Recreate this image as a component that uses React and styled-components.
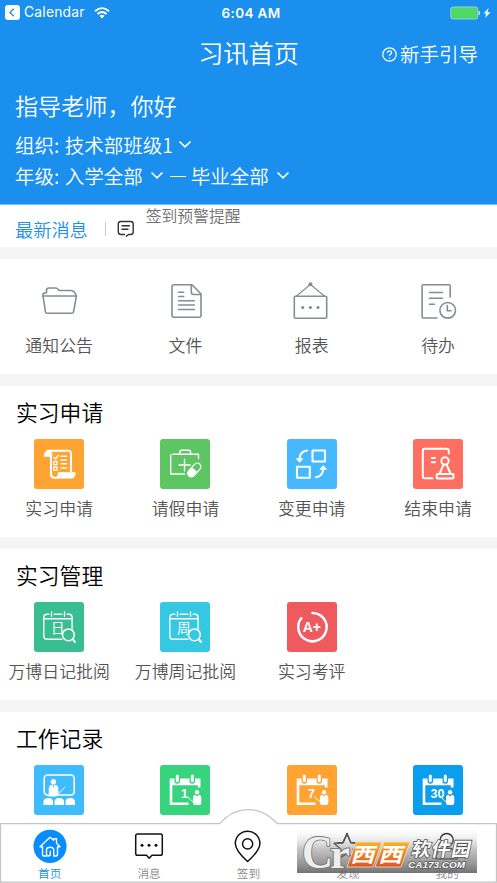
import React from "react";
import styled, { createGlobalStyle } from "styled-components";

const GlobalStyle = createGlobalStyle`
  *, *::before, *::after { box-sizing: border-box; }
  body {
    margin: 0;
    background: #fff;
    font-family: "Noto Sans CJK SC", sans-serif;
    font-weight: 350;
  }
`;

const Screen = styled.div`
  position: relative;
  width: 497px;
  height: 883px;
  overflow: hidden;
  display: flex;
  flex-direction: column;
  gap: 12px;
  background: #f5f5f5;
`;

const Top = styled.div`
  flex: none;
  height: 247px;
  background: #fff;
`;

const Header = styled.header`
  height: 205px;
  background: #1a8fee;
  border-bottom: 1px solid #7cbff5;
  color: #fff;
`;

const StatusBar = styled.div`
  display: grid;
  grid-template-columns: 1fr auto 1fr;
  align-items: center;
  height: 25px;
  padding: 0 5px 0 5px;
  font-family: Inter, sans-serif;
  font-size: 14px;
  line-height: 24px;
`;

const StatusSide = styled.div`
  display: flex;
  align-items: center;
  justify-content: ${(p) => (p.$end ? "flex-end" : "flex-start")};
`;

const BackApp = styled.span`
  margin: -1px 9px 0 4px;
  font-size: 13.8px;
  font-weight: 400;
  letter-spacing: 0.25px;
`;

const Clock = styled.span`
  padding: 0 0 0 5px;
  font-size: 13.5px;
  font-weight: 600;
  letter-spacing: 0.35px;
`;

const TitleBar = styled.div`
  display: grid;
  grid-template-columns: 1fr auto 1fr;
  align-items: center;
  height: 58px;
  padding-right: 19px;
`;

const Title = styled.h1`
  grid-column: 2;
  margin: 0 0 4px 19px;
  font-size: 25.2px;
  font-weight: 350;
  line-height: 36px;
`;

const Guide = styled.div`
  display: flex;
  align-items: center;
  justify-content: flex-end;
  gap: 3px;
  font-size: 19.5px;
  line-height: 28px;
`;

const Greeting = styled.div`
  height: 46px;
  padding-left: 15px;
  font-size: 23.1px;
  line-height: 44px;
`;

const FilterRow = styled.div`
  display: flex;
  align-items: center;
  height: 31px;
  padding-left: 15px;
  font-size: 19.5px;
  line-height: 31px;
  white-space: pre;
  word-spacing: 1.2px;
`;

const Dash = styled.span`
  width: 16px;
  height: 1px;
  margin: 2px 5px 0 6px;
  background: #fff;
`;

const News = styled.div`
  display: flex;
  height: 42px;
  padding-left: 15px;
`;

const NewsTitle = styled.div`
  font-size: 18.2px;
  line-height: 48px;
  color: #1a8fee;
`;

const NewsDivider = styled.div`
  width: 1px;
  height: 14px;
  margin: 17px 11px 0 17px;
  background: #c8c8c8;
`;

const NewsIcon = styled.svg`
  margin: 15px 11px 0 0;
`;

const NewsText = styled.div`
  font-size: 15.8px;
  line-height: 22px;
  color: #707070;
`;

const Section = styled.section`
  flex: none;
  height: ${(p) => p.$height}px;
  background: #fff;
`;

const Heading = styled.h2`
  margin: 0;
  height: 53px;
  padding-left: 16px;
  font-size: 21.8px;
  font-weight: 350;
  line-height: 51px;
  color: #000;
`;

const Grid = styled.div`
  display: grid;
  grid-template-columns: repeat(4, 126.3px);
  margin-left: -4px;
  padding-top: ${(p) => p.$top || 0}px;
`;

const Item = styled.div`
  display: flex;
  flex-direction: column;
  align-items: center;
`;

const Tile = styled.svg`
  width: 50px;
  height: 50px;
  border-radius: 3px;
  background: ${(p) => p.$color};
  fill: none;
  stroke: #fff;
  stroke-width: 1.6;
  stroke-linecap: round;
  stroke-linejoin: round;
`;

const LineIcon = styled.svg`
  width: 40px;
  height: 40px;
  fill: none;
  stroke: #858c96;
  stroke-width: 1.6;
  stroke-linecap: round;
  stroke-linejoin: round;
`;

const Label = styled.div`
  margin-top: ${(p) => p.$gap}px;
  font-size: 16.9px;
  line-height: 24px;
  color: #555;
  white-space: nowrap;
`;

const TabBar = styled.nav`
  position: absolute;
  left: 0;
  right: 0;
  bottom: 0;
  height: 74px;
`;

const TabShape = styled.svg`
  position: absolute;
  inset: 0;
`;

const Tabs = styled.div`
  position: relative;
  display: grid;
  grid-template-columns: repeat(5, 1fr);
  padding-top: 19px;
`;

const Tab = styled.div`
  display: flex;
  flex-direction: column;
  align-items: center;
  font-size: 11.7px;
  line-height: 16px;
  color: ${(p) => (p.$active ? "#1a8fee" : "#8c8c8c")};
`;

const TabIcon = styled.svg`
  width: 36px;
  height: 36px;
  margin-bottom: 1px;
  fill: none;
  stroke: #111;
  stroke-width: 1.5;
  stroke-linecap: round;
  stroke-linejoin: round;
`;

const Watermark = styled.svg`
  position: absolute;
  left: 297px;
  top: 826px;
`;

const ChevronSvg = styled.svg`
  margin-left: ${(p) => p.$left}px;
`;

const Chevron = ({ left }) => (
  <ChevronSvg $left={left} width="14" height="9" viewBox="0 0 14 9">
    <path d="M1.5 1.5 L7 6.8 L12.5 1.5" fill="none" stroke="#fff" strokeWidth="1.7" />
  </ChevronSvg>
);

const FolderIcon = () => (
  <LineIcon viewBox="0 0 40 40">
    <path d="M4 15 L6.5 31 Q6.7 32.3 8 32.3 H33 Q34.3 32.3 34.5 31 L37.4 15 Z" />
    <path d="M4 15 V12.8 L7.5 11.5 V9.5 Q7.5 7 10 7 H17 Q18.5 7 20 9.5 H31 Q35.5 9.5 36.5 13 L37.4 15" />
  </LineIcon>
);

const FileIcon = () => (
  <LineIcon viewBox="0 0 40 40">
    <path d="M9 3.7 H27 L36 13 V34 Q36 36.3 34 36.3 H9 Q7 36.3 7 34 V5.7 Q7 3.7 9 3.7 Z" />
    <path d="M26.3 4 V11 Q26.3 13.5 28.5 13.5 H36 M13.5 11.2 H18.7 M13.5 15.5 H18.7 M13.5 19.7 H29.3 M13.5 24 H29.3 M13.5 28.5 H29.3" />
  </LineIcon>
);

const ReportIcon = () => (
  <LineIcon viewBox="0 0 40 40">
    <rect x="2.3" y="15.2" width="32.4" height="22" rx="1" />
    <path d="M4.5 15 L18.4 3.5 L32.4 15" strokeWidth="1.1" />
    <g fill="#858c96" stroke="none">
      <circle cx="18.4" cy="3.2" r="2" />
      <circle cx="10.7" cy="26.5" r="1.6" />
      <circle cx="18.4" cy="26.5" r="1.6" />
      <circle cx="26" cy="26.5" r="1.6" />
    </g>
  </LineIcon>
);

const TodoIcon = () => (
  <LineIcon viewBox="0 0 40 40">
    <path d="M32.2 16 V5 Q32.2 3.7 31 3.7 H5.4 Q4.1 3.7 4.1 5 V35.7 Q4.1 37 5.4 37 H19 M11.5 11.5 H24.5 M11.5 17.2 H24.5 M11.5 23.2 H16.5" />
    <circle cx="29.7" cy="29.3" r="7.8" />
    <path d="M29.3 24.5 V29.7 H33" />
  </LineIcon>
);

const ScrollTile = () => (
  <Tile $color="#ffa333" viewBox="0 0 50 50">
    <path d="M16.5 17.5 H10 Q10 11.5 15 11.5 Q18 11.5 18 16 Z" fill="#fff" strokeWidth=".6" />
    <path d="M14 11.7 H34 Q37 11.7 37 15 V32 M17 16 V35 Q17 38.7 21 38.7" strokeWidth="2.1" />
    <path d="M24.5 33.5 H41.5 Q41 39.3 37.5 39.3 H20 Q23.7 38.5 24.5 33.5 Z" fill="#fff" strokeWidth=".6" />
    <path d="M20 18.5 L21.5 20 L24.3 16.5 M27 17.2 H32.5 M27 21 H32.5 M27 24.8 H32.5 M27 29 H32.5" strokeWidth="1.5" />
    <rect x="19.8" y="22.5" width="3.2" height="3.2" strokeWidth="1.3" />
    <rect x="19.8" y="28" width="3.2" height="3.2" strokeWidth="1.3" />
  </Tile>
);

const LeaveTile = () => (
  <Tile $color="#5dc562" viewBox="0 0 50 50">
    <path d="M12.7 15.3 H38.5 V19.5 M10.7 16 V35 H24.5 M20 15 V13 Q20 11.3 22 11.3 H28.5 Q30.5 11.3 30.5 13 V15 M24.5 20.3 V31.8 M19 26 H30.2" strokeWidth="1.4" />
    <g transform="rotate(42 34.3 31)">
      <rect x="30.7" y="23" width="7.2" height="16" rx="3.6" fill="#5dc562" strokeWidth="1.3" />
      <path d="M30.7 30.5 H37.9 V35.4 A3.6 3.6 0 0 1 30.7 35.4 Z" fill="#fff" stroke="none" />
    </g>
  </Tile>
);

const ChangeTile = () => (
  <Tile $color="#45b8ff" viewBox="0 0 50 50">
    <g strokeWidth="2.1">
      <rect x="25.5" y="11.5" width="12.5" height="11" />
      <rect x="10" y="27.8" width="12.8" height="11" />
      <path d="M20 11.5 Q12.8 12.5 12.5 20 M29 38.2 Q36 37.3 36.2 29.5" />
    </g>
    <path d="M9.8 20 L12.5 23.3 L15.5 20 Z M33.3 30 L36.3 26.7 L39.2 30 Z" fill="#fff" strokeWidth="1" />
  </Tile>
);

const FinishTile = () => (
  <Tile $color="#ff6f61" viewBox="0 0 50 50">
    <g strokeWidth="2">
      <path d="M35.8 14.5 V12 Q35.8 9.8 33.5 9.8 H12 Q9.8 9.8 9.8 12 V37 Q9.8 39.3 12 39.3 H19.5 M18.8 19 H22 M18.8 23.2 H22" />
      <circle cx="32" cy="22" r="3.7" />
      <path d="M30.5 25.5 L26.5 35 M33.5 25.5 L37.7 35" />
      <rect x="23.7" y="35" width="16.8" height="4.5" rx="1" />
    </g>
  </Tile>
);

const TileGlyph = styled.text`
  font-family: ${(p) => (p.$latin ? '"Liberation Sans"' : '"Noto Sans CJK SC"')}, sans-serif;
  font-size: ${(p) => p.$size}px;
  font-weight: ${(p) => (p.$latin ? 700 : 400)};
  text-anchor: middle;
  fill: #fff;
  stroke: none;
`;

const ReviewTile = ({ color, glyph }) => (
  <Tile $color={color} viewBox="0 0 50 50">
    <path d="M14.8 12.2 H13 Q9.8 12.2 9.8 15.5 V34 Q9.8 37.2 13 37.2 H28 M20.3 12.2 H27.7 M33.2 12.2 H35 Q38.1 12.2 38.1 15.5 V27 M10 16.7 H38 M17.5 10 V14.3 M30.5 10 V14.3" strokeWidth="1.4" />
    <TileGlyph $size={13.5} x="23.7" y="30.8">{glyph}</TileGlyph>
    <circle cx="34.4" cy="32.8" r="5.9" fill={color} strokeWidth="1.5" />
    <path d="M38.7 37.2 L41 40" strokeWidth="2" />
  </Tile>
);

const GradeTile = () => (
  <Tile $color="#ef5a5e" viewBox="0 0 50 50">
    <path d="M25.5 10.9 A14.2 14.2 0 1 1 14.3 16.3" strokeWidth="2.5" />
    <TileGlyph $latin $size={14} x="24.8" y="29.8">A+</TileGlyph>
  </Tile>
);

const ClassTile = () => (
  <Tile $color="#3fbbff" viewBox="0 0 50 50">
    <rect x="10.2" y="10" width="30" height="20" rx="3.5" />
    <g fill="#fff" stroke="none">
      <circle cx="19.4" cy="16.8" r="2.7" />
      <path d="M14.7 31.5 V24 Q14.7 20 18 19.7 H21 Q24.4 20 24.4 24 V29 L22.5 31.5 Z" />
      <path d="M9.5 40 V37 Q9.5 33 14.3 33 Q19 33 19 37 V40 Z M20.5 40 V37 Q20.5 33 25.2 33 Q30 33 30 37 V40 Z M31.5 40 V37 Q31.5 33 36.3 33 Q41 33 41 37 V40 Z" />
    </g>
    <path d="M23.5 29.8 L30.5 22.5" strokeWidth="1" />
    <path d="M19.4 20.3 V22" stroke="#3fbbff" strokeWidth="1" />
  </Tile>
);

const CalendarTile = ({ color, day }) => (
  <Tile $color={color} viewBox="0 0 50 50">
    <path d="M9.7 13.5 H40.5 V22.5 H37.8 V20.3 H12.3 V37.5 H28.5 V40 H9.7 Z" fill="#fff" stroke="none" />
    <path d="M17.3 11 V16 M32.3 11 V16" stroke={color} strokeWidth="5.6" />
    <path d="M17.3 11 V15.7 M32.3 11 V15.7" strokeWidth="3" />
    <TileGlyph $latin $size={12.5} x="24.5" y="33">{day}</TileGlyph>
    <g fill="#fff" stroke="none">
      <circle cx="37.1" cy="27.2" r="2.2" />
      <path d="M33 38 V33 Q33 30 35.2 29.7 L37.1 31.5 L39 29.7 Q41.3 30 41.3 33 V38 Q41.3 40 39.3 40 H35 Q33 40 33 38 Z" />
    </g>
    <path d="M27.5 31.8 L33.3 37.2" strokeWidth="1" />
  </Tile>
);

const sections = [
  {
    title: "实习申请",
    items: [
      [<ScrollTile />, "实习申请"],
      [<LeaveTile />, "请假申请"],
      [<ChangeTile />, "变更申请"],
      [<FinishTile />, "结束申请"],
    ],
  },
  {
    title: "实习管理",
    items: [
      [<ReviewTile color="#38be91" glyph="日" />, "万博日记批阅"],
      [<ReviewTile color="#34c8e2" glyph="周" />, "万博周记批阅"],
      [<GradeTile />, "实习考评"],
    ],
  },
  {
    title: "工作记录",
    items: [
      [<ClassTile />, ""],
      [<CalendarTile color="#38d37d" day="1" />, ""],
      [<CalendarTile color="#ffa333" day="7" />, ""],
      [<CalendarTile color="#0b9dee" day="30" />, ""],
    ],
  },
];

const quickLinks = [
  [<FolderIcon />, "通知公告"],
  [<FileIcon />, "文件"],
  [<ReportIcon />, "报表"],
  [<TodoIcon />, "待办"],
];

const IconGrid = ({ items, top, gap }) => (
  <Grid $top={top}>
    {items.map(([icon, label], i) => (
      <Item key={i}>
        {icon}
        {label && <Label $gap={gap}>{label}</Label>}
      </Item>
    ))}
  </Grid>
);

const SiteLogo = () => (
  <Watermark width="180" height="47" viewBox="0 0 180 47">
    <defs>
      <linearGradient id="shade" x1="0" y1="0" x2="0" y2="1">
        <stop offset="0" stopColor="#fff" stopOpacity="0" />
        <stop offset="0.5" stopColor="#999" stopOpacity="0.6" />
        <stop offset="1" stopColor="#6a6a6a" stopOpacity="0.94" />
      </linearGradient>
      <linearGradient id="flame" x1="0" y1="0" x2="0" y2="1">
        <stop offset="0" stopColor="#f9b429" />
        <stop offset="1" stopColor="#e4511e" />
      </linearGradient>
    </defs>
    <rect width="180" height="47" fill="url(#shade)" />
    <g fill="#eee" stroke="#777" strokeWidth="1.8" paintOrder="stroke" fontFamily="Liberation Serif, serif" fontWeight="700">
      <text x="5" y="42" fontSize="46" textLength="31" lengthAdjust="spacingAndGlyphs">C</text>
      <text x="33" y="42" fontSize="42" textLength="20" lengthAdjust="spacingAndGlyphs">r</text>
    </g>
    <path d="M40 17 L45.5 17 L50 8 L54 17 L62 17.5" fill="none" stroke="#555" strokeWidth="1.3" />
    <path d="M59 16 H85 L76 41 H50 Z M87 16 H113 L104 41 H78 Z" fill="url(#flame)" stroke="#e9e2dc" strokeWidth=".8" />
    <g fill="#fff" fontFamily="Noto Sans CJK SC, sans-serif">
      <g transform="translate(8.5 0) skewX(-16)" fontWeight="700">
        <text x="55" y="36" fontSize="20" textLength="24" lengthAdjust="spacingAndGlyphs">西</text>
        <text x="83" y="36" fontSize="20" textLength="24" lengthAdjust="spacingAndGlyphs">西</text>
      </g>
      <text transform="translate(7 0) skewX(-12)" x="113" y="30" fontSize="19" fontWeight="700" textLength="59" stroke="#555" strokeWidth="1.6" paintOrder="stroke">软件园</text>
    </g>
    <text x="111" y="41.5" fontFamily="Liberation Sans, sans-serif" fontSize="9.5" fontWeight="700" fontStyle="italic" textLength="57" lengthAdjust="spacingAndGlyphs" fill="#fff" stroke="#555" strokeWidth="1.4" paintOrder="stroke">CA173.COM</text>
  </Watermark>
);

export default function App() {
  return (
    <>
      <GlobalStyle />
      <Screen>
        <Top>
          <Header>
            <StatusBar>
              <StatusSide>
                <svg width="15" height="15" viewBox="0 0 15 15">
                  <rect width="15" height="15" rx="3" fill="#fff" />
                  <path d="M8.8 3.7 L5 7.5 L8.8 11.3" fill="none" stroke="#1a8fee" strokeWidth="1.4" />
                </svg>
                <BackApp>Calendar</BackApp>
                <svg width="16" height="12" viewBox="0 0 16 12" fill="none" stroke="#fff" strokeWidth="1.8">
                  <path d="M1 4.2 Q8 -1.9 15 4.2 M3.5 7 Q8 3 12.5 7" />
                  <path d="M5.5 8.8 Q8 6.6 10.5 8.8 L8 11.5 Z" fill="#fff" stroke="none" />
                </svg>
              </StatusSide>
              <Clock>6:04 AM</Clock>
              <StatusSide $end>
                <svg width="42" height="14" viewBox="0 0 42 14">
                  <rect x=".8" y="1" width="27" height="12" rx="2" fill="#4cd964" stroke="#9dc9e8" />
                  <path d="M29 5 Q30.5 7 29 9 Z" fill="#d7edff" stroke="#d7edff" strokeWidth=".7" />
                  <path d="M38.7 2 L33.5 7.6 H36.2 L35 12 L40.5 6.2 H37.5 Z" fill="#fff" />
                </svg>
              </StatusSide>
            </StatusBar>
            <TitleBar>
              <Title>习讯首页</Title>
              <Guide>
                <svg width="15" height="15" viewBox="0 0 15 15" fill="none" stroke="#fff" strokeWidth="1.2">
                  <circle cx="7.5" cy="7.5" r="6.7" />
                  <path d="M5.4 6 Q5.4 3.8 7.5 3.8 Q9.6 3.8 9.6 5.7 Q9.6 6.7 8.4 7.3 Q7.5 7.8 7.5 9" />
                  <circle cx="7.5" cy="11" r=".5" fill="#fff" strokeWidth=".4" />
                </svg>
                新手引导
              </Guide>
            </TitleBar>
            <Greeting>指导老师，你好</Greeting>
            <FilterRow>
              组织: 技术部班级1
              <Chevron left={5} />
            </FilterRow>
            <FilterRow>
              年级: 入学全部
              <Chevron left={7} />
              <Dash />
              毕业全部
              <Chevron left={7} />
            </FilterRow>
          </Header>
          <News>
            <NewsTitle>最新消息</NewsTitle>
            <NewsDivider />
            <NewsIcon width="18" height="18" viewBox="0 0 18 18" fill="none" stroke="#333" strokeWidth="1.4" strokeLinecap="round" strokeLinejoin="round">
              <path d="M7.5 14.5 H4 Q1.3 14.5 1.3 12 V4 Q1.3 1.5 4 1.5 H13.5 Q16.2 1.5 16.2 4 V12 Q16.2 14.5 13.5 14.5 H11.5 L9.3 16.3 M5 5.8 H12.5 M5 9.2 H11" />
            </NewsIcon>
            <NewsText>签到预警提醒</NewsText>
          </News>
        </Top>

        <Section $height={115}>
          <IconGrid items={quickLinks} top={22} gap={12} />
        </Section>

        {sections.map((s) => (
          <Section key={s.title} $height={151}>
            <Heading>{s.title}</Heading>
            <IconGrid items={s.items} gap={7} />
          </Section>
        ))}

        <TabBar>
          <TabShape width="497" height="74" viewBox="0 0 497 74">
            <path d="M.5 14.7 H219.7 L226 8.5 Q236 .7 248.5 .7 Q261 .7 270.5 8.5 L277.5 14.7 H496.5 V73.2 H.5 Z" fill="#fff" stroke="#c5c5c5" strokeWidth="1.3" />
          </TabShape>
          <Tabs>
            <Tab $active>
              <TabIcon viewBox="0 0 36 36">
                <circle cx="18" cy="18.3" r="16.6" fill="#078dff" stroke="none" />
                <path d="M14.5 28 H12 Q10.5 28 10.5 26.5 V18.7 H8 L18 9.2 L21.5 12.3 V10.7 H24.5 V15.2 L28 18.7 H25.5 V26.5 Q25.5 28 24 28 H22 M18.3 23.3 V26 Q18.3 28 16.5 28 Q14.5 28 14.5 26 V21.8 Q14.5 19.2 18.3 19.2 Q21.7 19.2 21.7 22 V28" stroke="#fff" strokeWidth="1.4" />
              </TabIcon>
              首页
            </Tab>
            <Tab>
              <TabIcon viewBox="0 0 36 36">
                <path d="M6.5 6 H29.5 Q31.3 6 31.3 7.8 V25.5 Q31.3 27.3 29.5 27.3 H21 L18.2 30.3 L15.5 27.3 H6.5 Q4.7 27.3 4.7 25.5 V7.8 Q4.7 6 6.5 6 Z" />
                <g fill="#111" stroke="none">
                  <circle cx="11" cy="17.2" r="1.5" />
                  <circle cx="18" cy="17.2" r="1.5" />
                  <circle cx="25" cy="17.2" r="1.5" />
                </g>
              </TabIcon>
              消息
            </Tab>
            <Tab>
              <TabIcon viewBox="0 0 36 36">
                <path d="M17.6 33.5 Q5.3 22.5 5.3 15.5 A12.3 12.3 0 0 1 29.9 15.5 Q29.9 22.5 17.6 33.5 Z" />
                <circle cx="17.6" cy="15.8" r="5.1" />
              </TabIcon>
              签到
            </Tab>
            <Tab>
              <TabIcon viewBox="0 0 36 36">
                <path d="M17 5.5 L20.7 14.5 L30 15.2 L23 21.2 L25.2 30.5 L17 25.5 L8.8 30.5 L11 21.2 L4 15.2 L13.3 14.5 Z" />
              </TabIcon>
              发现
            </Tab>
            <Tab>
              <TabIcon viewBox="0 0 36 36">
                <circle cx="17.7" cy="12" r="6.5" />
                <path d="M7 31 Q7 20 17.7 20 Q28.5 20 28.5 31 Z" />
              </TabIcon>
              我的
            </Tab>
          </Tabs>
        </TabBar>
        <SiteLogo />
      </Screen>
    </>
  );
}
